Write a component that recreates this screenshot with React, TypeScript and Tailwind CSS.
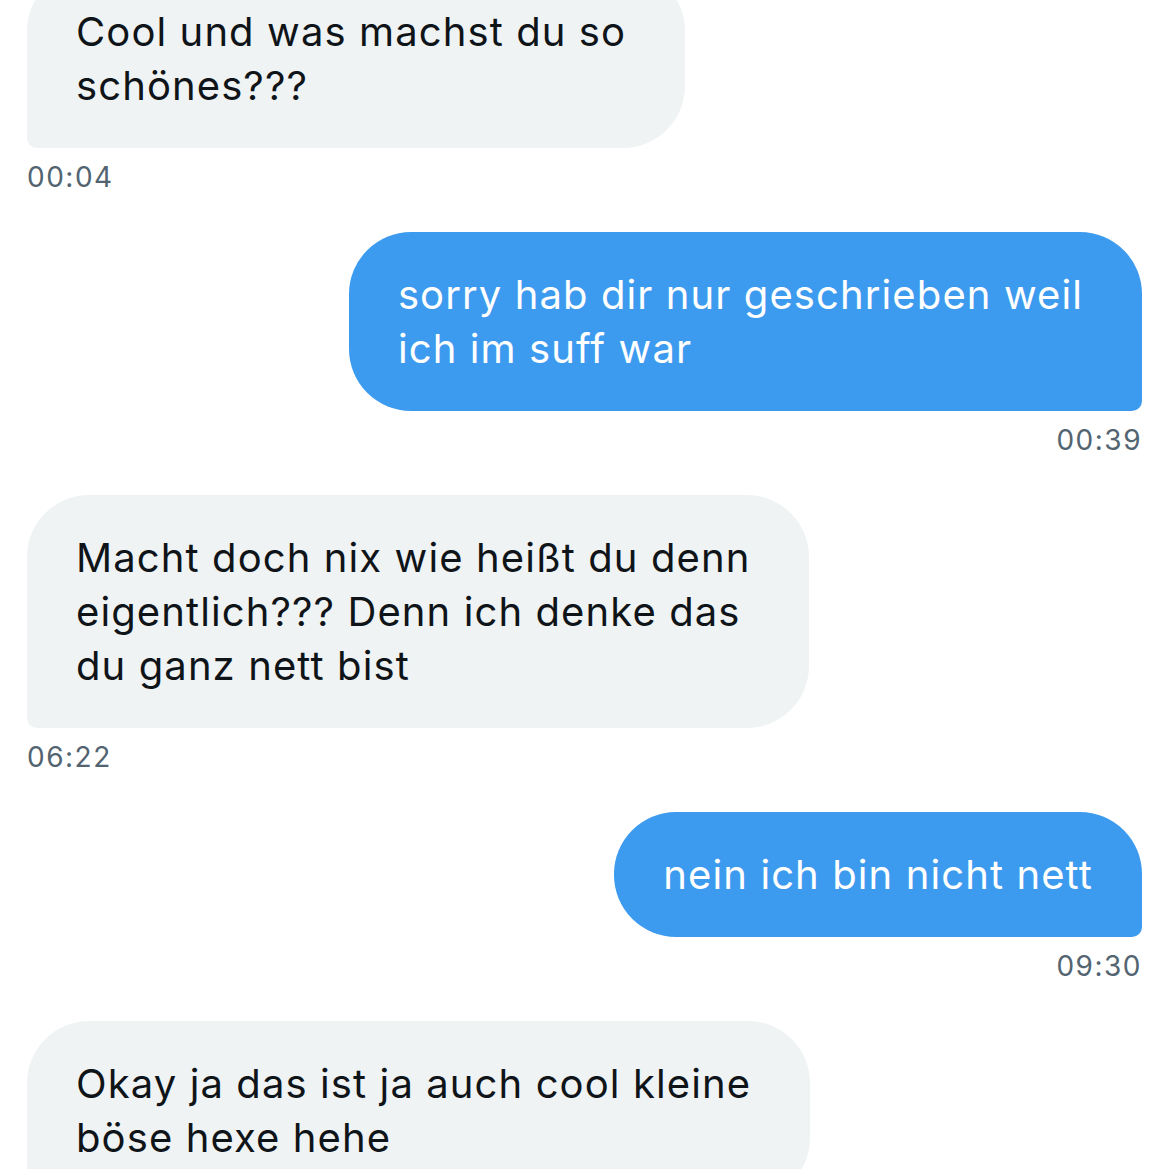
// Chat-Verlauf: graue Nachrichten links, blaue rechts, Uhrzeit darunter

type Msg = { lines: string[]; time: string; mine: boolean };

const messages: Msg[] = [
    { lines: ["Cool und was machst du so", "schönes???"], time: "00:04", mine: false },
    { lines: ["sorry hab dir nur geschrieben weil", "ich im suff war"], time: "00:39", mine: true },
    { lines: ["Macht doch nix wie heißt du denn", "eigentlich??? Denn ich denke das", "du ganz nett bist"], time: "06:22", mine: false },
    { lines: ["nein ich bin nicht nett"], time: "09:30", mine: true },
    { lines: ["Okay ja das ist ja auch cool kleine", "böse hexe hehe"], time: "", mine: false },
];

const Bubble = ({ msg }: { msg: Msg }) => {
    const multi = msg.lines.length > 1;
    return (
        <div className={msg.mine ? "flex flex-col items-end mb-[37px]" : "flex flex-col items-start mb-[37px]"}>
            <div
                className={
                    (msg.mine
                        ? "bg-[#3d9bef] text-white rounded-[62px] rounded-br-[10px] "
                        : "bg-[#eff3f4] text-[#0f1419] rounded-[62px] rounded-bl-[10px] ") +
                    (multi ? "pr-[59px] " : "pr-[49px] ") +
                    "pl-[49px] pt-[36px] pb-[35px] text-[40px] leading-[54px] tracking-[1.1px] whitespace-nowrap"
                }
            >
                {msg.lines.map((l, i) => (
                    <div key={i}>{l}</div>
                ))}
            </div>
            {msg.time && (
                <div className="mt-[11px] text-[28px] leading-[36px] tracking-[1.5px] text-[#536471]">{msg.time}</div>
            )}
        </div>
    );
};

export default function App() {
    return (
        <div className="w-[1169px] h-[1169px] overflow-hidden bg-white font-['Inter',sans-serif]">
            <div className="-mt-[31px] pl-[27px] pr-[27px]">
                {messages.map((m, i) => (
                    <Bubble key={i} msg={m} />
                ))}
            </div>
        </div>
    );
}
